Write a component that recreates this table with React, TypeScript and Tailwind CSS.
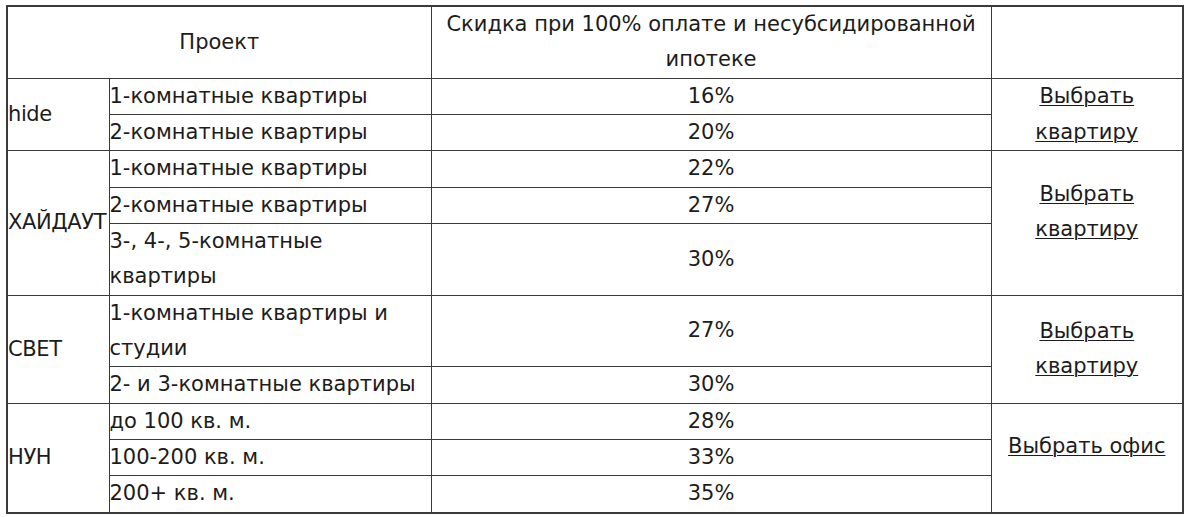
const rows: {
  project?: { name: string; span: number };
  label: string;
  value: string;
  link?: { text: string; span: number };
}[] = [
  { project: { name: 'hide', span: 2 }, label: '1-комнатные квартиры', value: '16%', link: { text: 'Выбрать квартиру', span: 2 } },
  { label: '2-комнатные квартиры', value: '20%' },
  { project: { name: 'ХАЙДАУТ', span: 3 }, label: '1-комнатные квартиры', value: '22%', link: { text: 'Выбрать квартиру', span: 3 } },
  { label: '2-комнатные квартиры', value: '27%' },
  { label: '3-, 4-, 5-комнатные квартиры', value: '30%' },
  { project: { name: 'СВЕТ', span: 2 }, label: '1-комнатные квартиры и студии', value: '27%', link: { text: 'Выбрать квартиру', span: 2 } },
  { label: '2- и 3-комнатные квартиры', value: '30%' },
  { project: { name: 'НУН', span: 3 }, label: 'до 100 кв. м.', value: '28%', link: { text: 'Выбрать офис', span: 3 } },
  { label: '100-200 кв. м.', value: '33%' },
  { label: '200+ кв. м.', value: '35%' },
];

const cell = 'border border-[#3a3a3a] p-0 align-middle';

export default function App() {
  return (
    <div className="w-[1196px] h-[517px] bg-white pl-[6px] pt-[5px] text-[#1c1c1c] font-['DejaVu_Sans',sans-serif] text-[21px] leading-[35.35px]">
      <table className="w-[1176px] border-collapse border-2 border-[#3a3a3a] table-fixed">
        <colgroup>
          <col className="w-[102px]" />
          <col className="w-[322px]" />
          <col className="w-[560px]" />
          <col className="w-[192px]" />
        </colgroup>
        <thead>
          <tr>
            <th colSpan={2} className={`${cell} font-normal text-center`}>Проект</th>
            <th className={`${cell} font-normal text-center px-2`}>
              Скидка при 100% оплате и несубсидированной ипотеке
            </th>
            <th className={cell}></th>
          </tr>
        </thead>
        <tbody>
          {rows.map((r, i) => (
            <tr key={i}>
              {r.project && (
                <td
                  rowSpan={r.project.span}
                  className={`${cell} text-left whitespace-nowrap tracking-[-0.4px]`}
                >
                  {r.project.name}
                </td>
              )}
              <td className={`${cell} text-left pr-2`}>{r.label}</td>
              <td className={`${cell} text-center`}>{r.value}</td>
              {r.link && (
                <td
                  rowSpan={r.link.span}
                  className={`${cell} text-center px-2 ${r.link.span === 3 ? 'pb-[22px]' : ''}`}
                >
                  <a href="#" className="underline underline-offset-2 decoration-1 text-[#1c1c1c]">
                    {r.link.text}
                  </a>
                </td>
              )}
            </tr>
          ))}
        </tbody>
      </table>
    </div>
  );
}
